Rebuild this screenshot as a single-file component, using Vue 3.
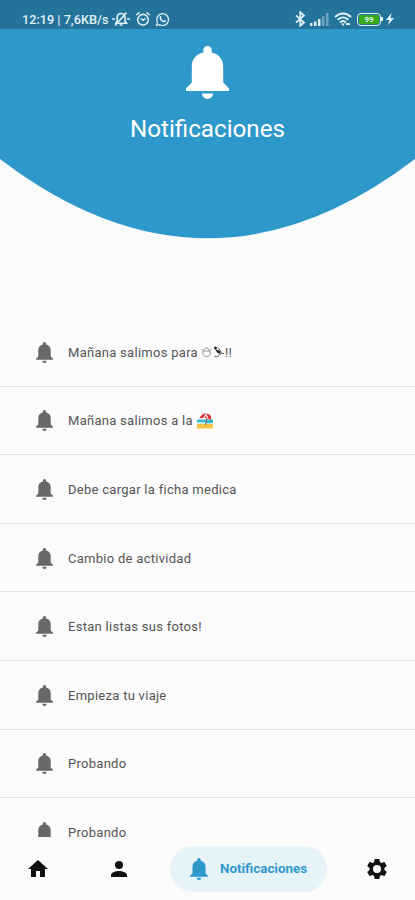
<script setup>
import { ref } from 'vue'

// --- State ---
const activeTab = ref('notificaciones')

const notifications = ref([
    { id: 1, text: 'Mañana salimos para', icon: 'snow', tail: '!!' },
    { id: 2, text: 'Mañana salimos a la', icon: 'beach' },
    { id: 3, text: 'Debe cargar la ficha medica' },
    { id: 4, text: 'Cambio de actividad' },
    { id: 5, text: 'Estan listas sus fotos!' },
    { id: 6, text: 'Empieza tu viaje' },
    { id: 7, text: 'Probando' },
    { id: 8, text: 'Probando' }
])

// --- Shapes ---
const bellPath = 'M17.300 6.500V4.200a4.200 4.200 0 0 1 8.400 0V6.500C33 8 37.200 13.500 37.200 20.500V36.500L43 42.500V45H0v-2.500L5.800 36.500V20.500C5.800 13.500 10 8 17.300 6.500ZM16 47.400h11a5.500 5.500 0 0 1-11 0Z'
</script>

<template>
  <div class="screen">
    <!-- Status bar -->
    <div class="status-bar">
        <span class="status-text">12:19 | 7,6KB/s</span>
        <svg class="muted" viewBox="0 0 18 16">
            <path d="M4 12.2h10.5L13 10V6.5C13 4 11.5 2.5 9 2.5S5.2 4 5.2 6.5V10Z M7.5 14h3" fill="none" stroke="currentColor" stroke-width="1.6" />
            <path d="M3.2 14.5 14.5 1.5M0 8h3M15 8h3" stroke="currentColor" stroke-width="1.5" />
        </svg>
        <svg class="alarm" viewBox="0 0 16 16">
            <circle cx="8" cy="8.7" r="5.3" fill="none" stroke="currentColor" stroke-width="1.6" />
            <path d="M1.2 4 4.5 1.3M14.8 4l-3.3-2.7M5.6 7.2 8 9.3l2.5-2" fill="none" stroke="currentColor" stroke-width="1.5" />
        </svg>
        <svg class="whatsapp" viewBox="0 0 16 16">
            <path d="M1.6 14.4 2.6 11A6.3 6.3 0 1 1 5 13.5Z" fill="none" stroke="currentColor" stroke-width="1.3" />
            <path d="M5.2 4.5c.8-.7 1.3-.2 1.8 1.3l-.6.9c.6 1.2 1.4 2 2.7 2.6l1-.9c1.5.5 2 .9 1.2 1.9-1 1-2.7.8-4.4-.4C5.200 8.600 4.200 6 5.200 4.500Z" fill="currentColor" />
        </svg>
        <div class="status-right">
            <svg class="bluetooth" viewBox="0 0 11 16">
                <path d="m1 4.300 8 7.200-3.700 3.300V1.200L9 4.500l-8 7.200" fill="none" stroke="currentColor" stroke-width="1.800" />
            </svg>
            <svg class="signal" viewBox="0 0 19 13">
                <path d="M0 10h2.500v3H0ZM4 8.500h2.500V13H4ZM8 6h2.500v7H8Z" fill="currentColor" />
                <path d="M12 3h2.500v10H12ZM16 0h2.500v13H16Z" fill="currentColor" opacity=".4" />
            </svg>
            <svg class="wifi" viewBox="0 0 18 14">
                <path d="M1 5c4.700-4.700 11.300-4.700 16 0M3.600 7.800c3.200-3 7.600-3 10.800 0M6 10.400c1.900-1.700 4.100-1.700 6 0" fill="none" stroke="currentColor" stroke-width="2" />
                <path d="M7 11.500h4L9 14ZM12 11h4v2h-4Z" fill="currentColor" />
            </svg>
            <span class="battery"><span class="battery-level">99</span></span>
            <svg class="bolt" viewBox="0 0 8 12">
                <path d="M5.500 0 0 7h3.300L2 12l6-7H4.600Z" fill="currentColor" />
            </svg>
        </div>
    </div>

    <!-- Curved header -->
    <header class="header">
        <svg class="header-bell" viewBox="0 0 43 53"><path :d="bellPath" fill="currentColor" /></svg>
        <h1>Notificaciones</h1>
    </header>
    <svg class="curve" viewBox="0 0 415 80" preserveAspectRatio="none">
        <path d="M0 0Q207.500 158.500 415 0Z" fill="#2f98cb" />
    </svg>

    <!-- Notification list -->
    <main class="list">
        <div v-for="item in notifications" :key="item.id" class="row">
            <svg class="row-bell" viewBox="0 0 43 53"><path :d="bellPath" fill="currentColor" /></svg>
            <span>{{ item.text }}</span>
            <svg v-if="item.icon === 'snow'" class="snow" viewBox="0 0 24 12">
                <g fill="none" stroke="#888" stroke-width=".9">
                    <path d="M2.500 5C.8 7.500 1.700 10.500 5.500 10.500S10.200 7.500 8.500 5" />
                    <path d="M3 4.500c0-3.500 5-3.500 5 0M2.500 5h6M.5 3l2 2M10.500 3l-2 2" />
                </g>
                <circle cx="14.500" cy="2" r="1.400" fill="#222" />
                <path d="m14 3 5 2 .8 3-3.300-1Z" fill="#222" />
                <path d="M13.500 10.500c3 .6 4.500-.5 6-2.500M17 1.500l4 5.500M20.500 7.500h2.500" fill="none" stroke="#555" />
            </svg>
            <svg v-if="item.icon === 'beach'" class="beach" viewBox="0 0 16 16">
                <path d="M0 6.500h16V11H0Z" fill="#35b6ca" />
                <path d="M0 9.500q4-1.500 8 0t8 0V11H0Z" fill="#c4ece9" />
                <path d="M0 11h16v4.500H0Z" fill="#f5c444" />
                <path d="m10.500 3-2 9" stroke="#8b6a50" stroke-width="1" />
                <path d="M2.500 5.500C4 .5 10-1.500 14 3v4Q8 3.500 2.500 5.500Z" fill="#db303b" />
                <path d="M6.500 4.500 9 .6l2.700 5-1.700-.8L8.700 2.500 8 4.500Z" fill="#fff" />
            </svg>
            <span v-if="item.tail">{{ item.tail }}</span>
        </div>
    </main>

    <!-- Bottom navigation -->
    <nav class="bottom-nav">
        <button class="tab home" @click="activeTab = 'inicio'">
            <svg viewBox="0 0 24 24"><path d="M10 20v-6h4v6h5v-8h3L12 3 2 12h3v8Z" fill="currentColor" /></svg>
        </button>
        <button class="tab person" @click="activeTab = 'perfil'">
            <svg viewBox="0 0 24 24"><path d="M12 12a4 4 0 1 0 0-8 4 4 0 0 0 0 8Zm0 2c-2.670 0-8 1.340-8 4v2h16v-2c0-2.660-5.330-4-8-4Z" fill="currentColor" /></svg>
        </button>
        <button class="tab pill" :class="{ active: activeTab === 'notificaciones' }" @click="activeTab = 'notificaciones'">
            <svg class="pill-bell" viewBox="0 0 43 53"><path :d="bellPath" fill="currentColor" /></svg>
            <span>Notificaciones</span>
        </button>
        <button class="tab gear" @click="activeTab = 'ajustes'">
            <svg viewBox="0 0 24 24">
                <path fill-rule="evenodd" fill="currentColor" d="M19.430 12.980c.04-.32.07-.64.07-.98s-.03-.66-.07-.98l2.110-1.650c.19-.15.24-.42.12-.64l-2-3.460c-.12-.22-.39-.3-.61-.22l-2.490 1c-.52-.4-1.080-.73-1.690-.98l-.38-2.650A.49.49 0 0 0 14 2h-4c-.25 0-.46.18-.49.42l-.38 2.650c-.61.25-1.170.59-1.690.98l-2.490-1c-.23-.09-.49 0-.61.22l-2 3.460c-.13.22-.07.49.12.64l2.110 1.650c-.04.32-.07.65-.07.98s.03.66.07.98l-2.110 1.650c-.19.15-.24.42-.12.64l2 3.460c.12.22.39.3.61.22l2.490-1c.52.4 1.080.73 1.690.98l.38 2.650c.03.24.24.42.49.42h4c.25 0 .46-.18.49-.42l.38-2.650c.61-.25 1.170-.59 1.690-.98l2.490 1c.23.09.49 0 .61-.22l2-3.460c.12-.22.07-.49-.12-.64ZM12 16a4 4 0 1 1 0-8 4 4 0 0 1 0 8Z" />
            </svg>
        </button>
    </nav>
  </div>
</template>

<style>
body {
    background: #fbfbfb;
}
</style>

<style scoped>
.screen {
    width: 415px;
    height: 900px;
    display: flex;
    flex-direction: column;
    overflow: hidden;
    background: #fbfbfb;
    font-family: Roboto, "Noto Sans", sans-serif;
}

svg {
    display: block;
    flex: none;
}

/* Status bar */
.status-bar {
    box-sizing: border-box;
    height: 29px;
    flex: none;
    display: flex;
    align-items: center;
    padding: 9px 21px 0 22px;
    background: #23739b;
    color: #e0f1f8;
}

.status-text {
    width: 88px;
    font-size: 12.7px;
    font-weight: 500;
    white-space: nowrap;
}

.muted {
    width: 18px;
    height: 16px;
    margin-left: 2px;
}

.alarm {
    width: 16px;
    height: 16px;
    margin-left: 5px;
}

.whatsapp {
    width: 15px;
    height: 15px;
    margin-left: 4px;
}

.status-right {
    margin-left: auto;
    display: flex;
    align-items: center;
}

.bluetooth {
    width: 11px;
    height: 16px;
}

.signal {
    width: 19px;
    height: 13px;
    margin-left: 4px;
}

.wifi {
    width: 18px;
    height: 14px;
    margin-left: 5px;
}

.battery {
    box-sizing: border-box;
    position: relative;
    width: 24px;
    height: 13px;
    margin-left: 5px;
    padding: 1px;
    border: 1.5px solid #e0f1f8;
    border-radius: 4px;
}

.battery::after {
    content: '';
    position: absolute;
    right: -3px;
    top: 3px;
    width: 2px;
    height: 4px;
    background: #e0f1f8;
}

.battery-level {
    display: block;
    height: 9px;
    border-radius: 1px;
    background: #36a91c;
    font-size: 8px;
    font-weight: 700;
    line-height: 9px;
    text-align: center;
}

.bolt {
    width: 8px;
    height: 12px;
    margin-left: 5px;
}

/* Header */
.header {
    height: 130px;
    flex: none;
    display: flex;
    flex-direction: column;
    align-items: center;
    background: #2f98cb;
    color: #fff;
}

.header-bell {
    width: 43px;
    height: 53px;
    margin-top: 17px;
}

.header h1 {
    margin: 15px 0 0;
    font-size: 24.2px;
    font-weight: 400;
    line-height: 30px;
}

.curve {
    width: 415px;
    height: 80px;
}

/* List */
.list {
    flex: 1;
    min-height: 0;
    overflow: hidden;
    padding-top: 79px;
}

.row {
    box-sizing: border-box;
    height: 68.6px;
    display: flex;
    align-items: center;
    padding: 1px 0 0 36px;
    border-bottom: 1.5px solid #e4e4e4;
    color: #555;
    font-size: 13px;
    letter-spacing: 0.28px;
    white-space: nowrap;
}

.row-bell {
    width: 17px;
    height: 21px;
    margin-right: 15px;
    color: #686868;
}

.snow {
    width: 24px;
    height: 12px;
    margin-left: 3px;
}

.beach {
    width: 16px;
    height: 16px;
    margin-left: 4px;
}

/* Bottom navigation */
.bottom-nav {
    box-sizing: border-box;
    height: 63px;
    flex: none;
    display: flex;
    align-items: center;
    padding: 0 26px;
    background: #fbfbfb;
}

.tab {
    display: flex;
    align-items: center;
    padding: 0;
    border: none;
    background: transparent;
    color: #111;
    font-family: inherit;
    cursor: pointer;
}

.tab svg {
    width: 24px;
    height: 24px;
}

.person {
    margin-left: 57px;
}

.pill {
    box-sizing: border-box;
    width: 157px;
    height: 46px;
    margin-left: 39px;
    padding-left: 20px;
    border-radius: 23px;
    font-size: 13.4px;
    font-weight: 700;
}

.pill.active {
    background: #e6f3f8;
    color: #2f98cb;
}

.tab .pill-bell {
    width: 18px;
    height: 22px;
    margin-right: 12px;
}

.gear {
    margin-left: auto;
}
</style>
